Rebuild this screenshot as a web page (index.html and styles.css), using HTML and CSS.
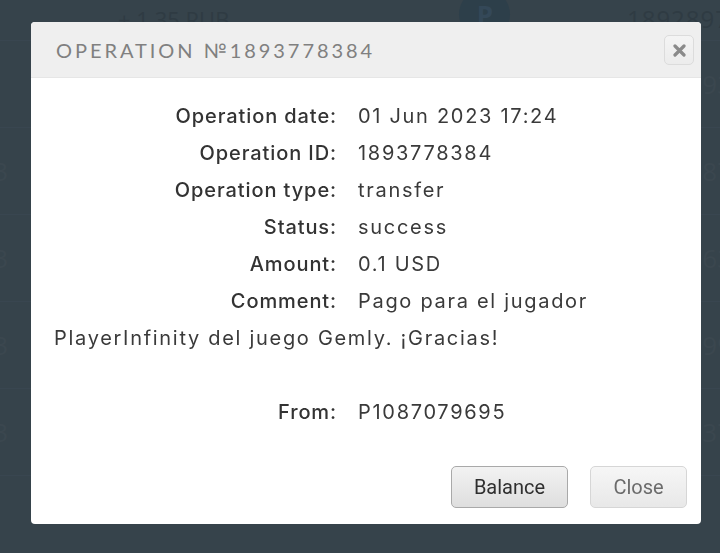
FILE: index.html
```html
<!DOCTYPE html>
<html>
<head>
<meta charset="utf-8">
<link rel="stylesheet" href="styles.css">
</head>
<body>
<div class="page">
  <div class="bg-row bg-first">
    <span class="bg-amount">+ 1.35 RUB</span>
    <span class="bg-icon">P</span>
    <span class="bg-num">1892897</span>
  </div>
  <div class="bg-row"><span class="bg-left"></span><span class="bg-right">93</span></div>
  <div class="bg-row"><span class="bg-left">3</span><span class="bg-right">87</span></div>
  <div class="bg-row"><span class="bg-left">3</span><span class="bg-right">63</span></div>
  <div class="bg-row"><span class="bg-left">3</span><span class="bg-right">99</span></div>
  <div class="bg-row"><span class="bg-left">3</span><span class="bg-right">37</span></div>
</div>

<div class="modal">
  <div class="modal-header">
    <h1 class="modal-title">Operation №1893778384</h1>
    <button class="x-btn" aria-label="close">
      <svg width="13" height="13" viewBox="0 0 13 13"><path d="M2 2 L11 11 M11 2 L2 11" stroke="#8a8a8a" stroke-width="3.2" stroke-linecap="round"/></svg>
    </button>
  </div>
  <div class="modal-body">
    <div class="row"><span class="label">Operation date:</span><span class="value">01 Jun 2023 17:24</span></div>
    <div class="row"><span class="label">Operation ID:</span><span class="value">1893778384</span></div>
    <div class="row"><span class="label">Operation type:</span><span class="value">transfer</span></div>
    <div class="row"><span class="label">Status:</span><span class="value">success</span></div>
    <div class="row"><span class="label">Amount:</span><span class="value">0.1 USD</span></div>
    <div class="row"><span class="label">Comment:</span><span class="value">Pago para el jugador PlayerInfinity del juego Gemly. ¡Gracias!</span></div>
    <div class="row empty"></div>
    <div class="row"><span class="label">From:</span><span class="value">P1087079695</span></div>
  </div>
  <div class="modal-footer">
    <button class="btn btn-primary">Balance</button>
    <button class="btn btn-muted">Close</button>
  </div>
</div>
</body>
</html>
```

FILE: styles.css
```css
html, body {
  margin: 0;
  padding: 0;
}
body {
  width: 720px;
  height: 553px;
  overflow: hidden;
  background: #36434b;
  font-family: Inter, "Noto Sans", sans-serif;
}
.page {
  display: flex;
  flex-direction: column;
}
.bg-row {
  height: 86px;
  display: flex;
  align-items: center;
  justify-content: space-between;
  color: #3b474f;
  font-family: "Open Sans", sans-serif;
  font-size: 26px;
  border-bottom: 1px solid #394650;
}
.bg-first {
  height: 40px;
  align-items: flex-start;
}
.bg-amount {
  margin-left: 118px;
  margin-top: 4px;
  font-size: 22px;
  color: #2f3b43;
}
.bg-icon {
  width: 51px;
  height: 51px;
  border-radius: 50%;
  background: #2d3f4a;
  color: #344858;
  display: flex;
  align-items: center;
  justify-content: center;
  font-weight: bold;
  margin-top: -11px;
  margin-left: 230px;
  font-size: 26px;
}
.bg-num {
  margin-left: auto;
  margin-right: -10px;
  margin-top: 2px;
  font-size: 24px;
  color: #2f3b43;
  letter-spacing: 1px;
}
.bg-left {
  width: 10px;
  overflow: hidden;
  direction: rtl;
  margin-left: -2px;
}
.bg-right {
  margin-right: -12px;
}

.modal {
  position: fixed;
  left: 31px;
  top: 22px;
  width: 670px;
  height: 502px;
  background: #fff;
  border-radius: 4px;
  display: flex;
  flex-direction: column;
  overflow: hidden;
}
.modal-header {
  height: 55px;
  background: #efefef;
  border-bottom: 1px solid #e6e6e6;
  display: flex;
  align-items: center;
  justify-content: space-between;
  padding: 0 7px 0 25px;
  flex-shrink: 0;
}
.modal-title {
  margin: 0;
  font-family: Lato, "DejaVu Sans", sans-serif;
  font-weight: 400;
  font-size: 20px;
  letter-spacing: 2.95px;
  text-transform: uppercase;
  color: #808080;
}
.x-btn {
  width: 30px;
  height: 30px;
  border: 1px solid #dcdcdc;
  border-radius: 5px;
  background: linear-gradient(#f4f4f4, #ececec);
  display: flex;
  align-items: center;
  justify-content: center;
  padding: 0;
  margin-top: 1px;
}
.modal-body {
  padding: 20px 20px 0 23px;
  font-size: 20px;
  line-height: 37px;
  color: #333;
}
.row {
  min-height: 37px;
}
.label {
  display: inline-block;
  width: 283px;
  text-align: right;
  margin-right: 21px;
  font-weight: 500;
  letter-spacing: 0.9px;
  color: #333;
}
.value {
  color: #3a3a3a;
  letter-spacing: 1.7px;
}
.modal-footer {
  margin-top: auto;
  display: flex;
  justify-content: flex-end;
  gap: 22px;
  padding: 0 14px 16px 0;
}
.btn {
  height: 42px;
  font-family: Roboto, sans-serif;
  font-size: 20px;
  border-radius: 5px;
  padding: 0;
}
.btn-primary {
  width: 117px;
  color: #2f2f2f;
  border: 1px solid #a9a9a9;
  background: linear-gradient(#f2f2f2 0%, #e8e8e8 50%, #dedede 100%);
}
.btn-muted {
  width: 97px;
  color: #6b6b6b;
  border: 1px solid #d6d6d6;
  background: linear-gradient(#f6f6f6 0%, #efefef 50%, #e8e8e8 100%);
}
```
